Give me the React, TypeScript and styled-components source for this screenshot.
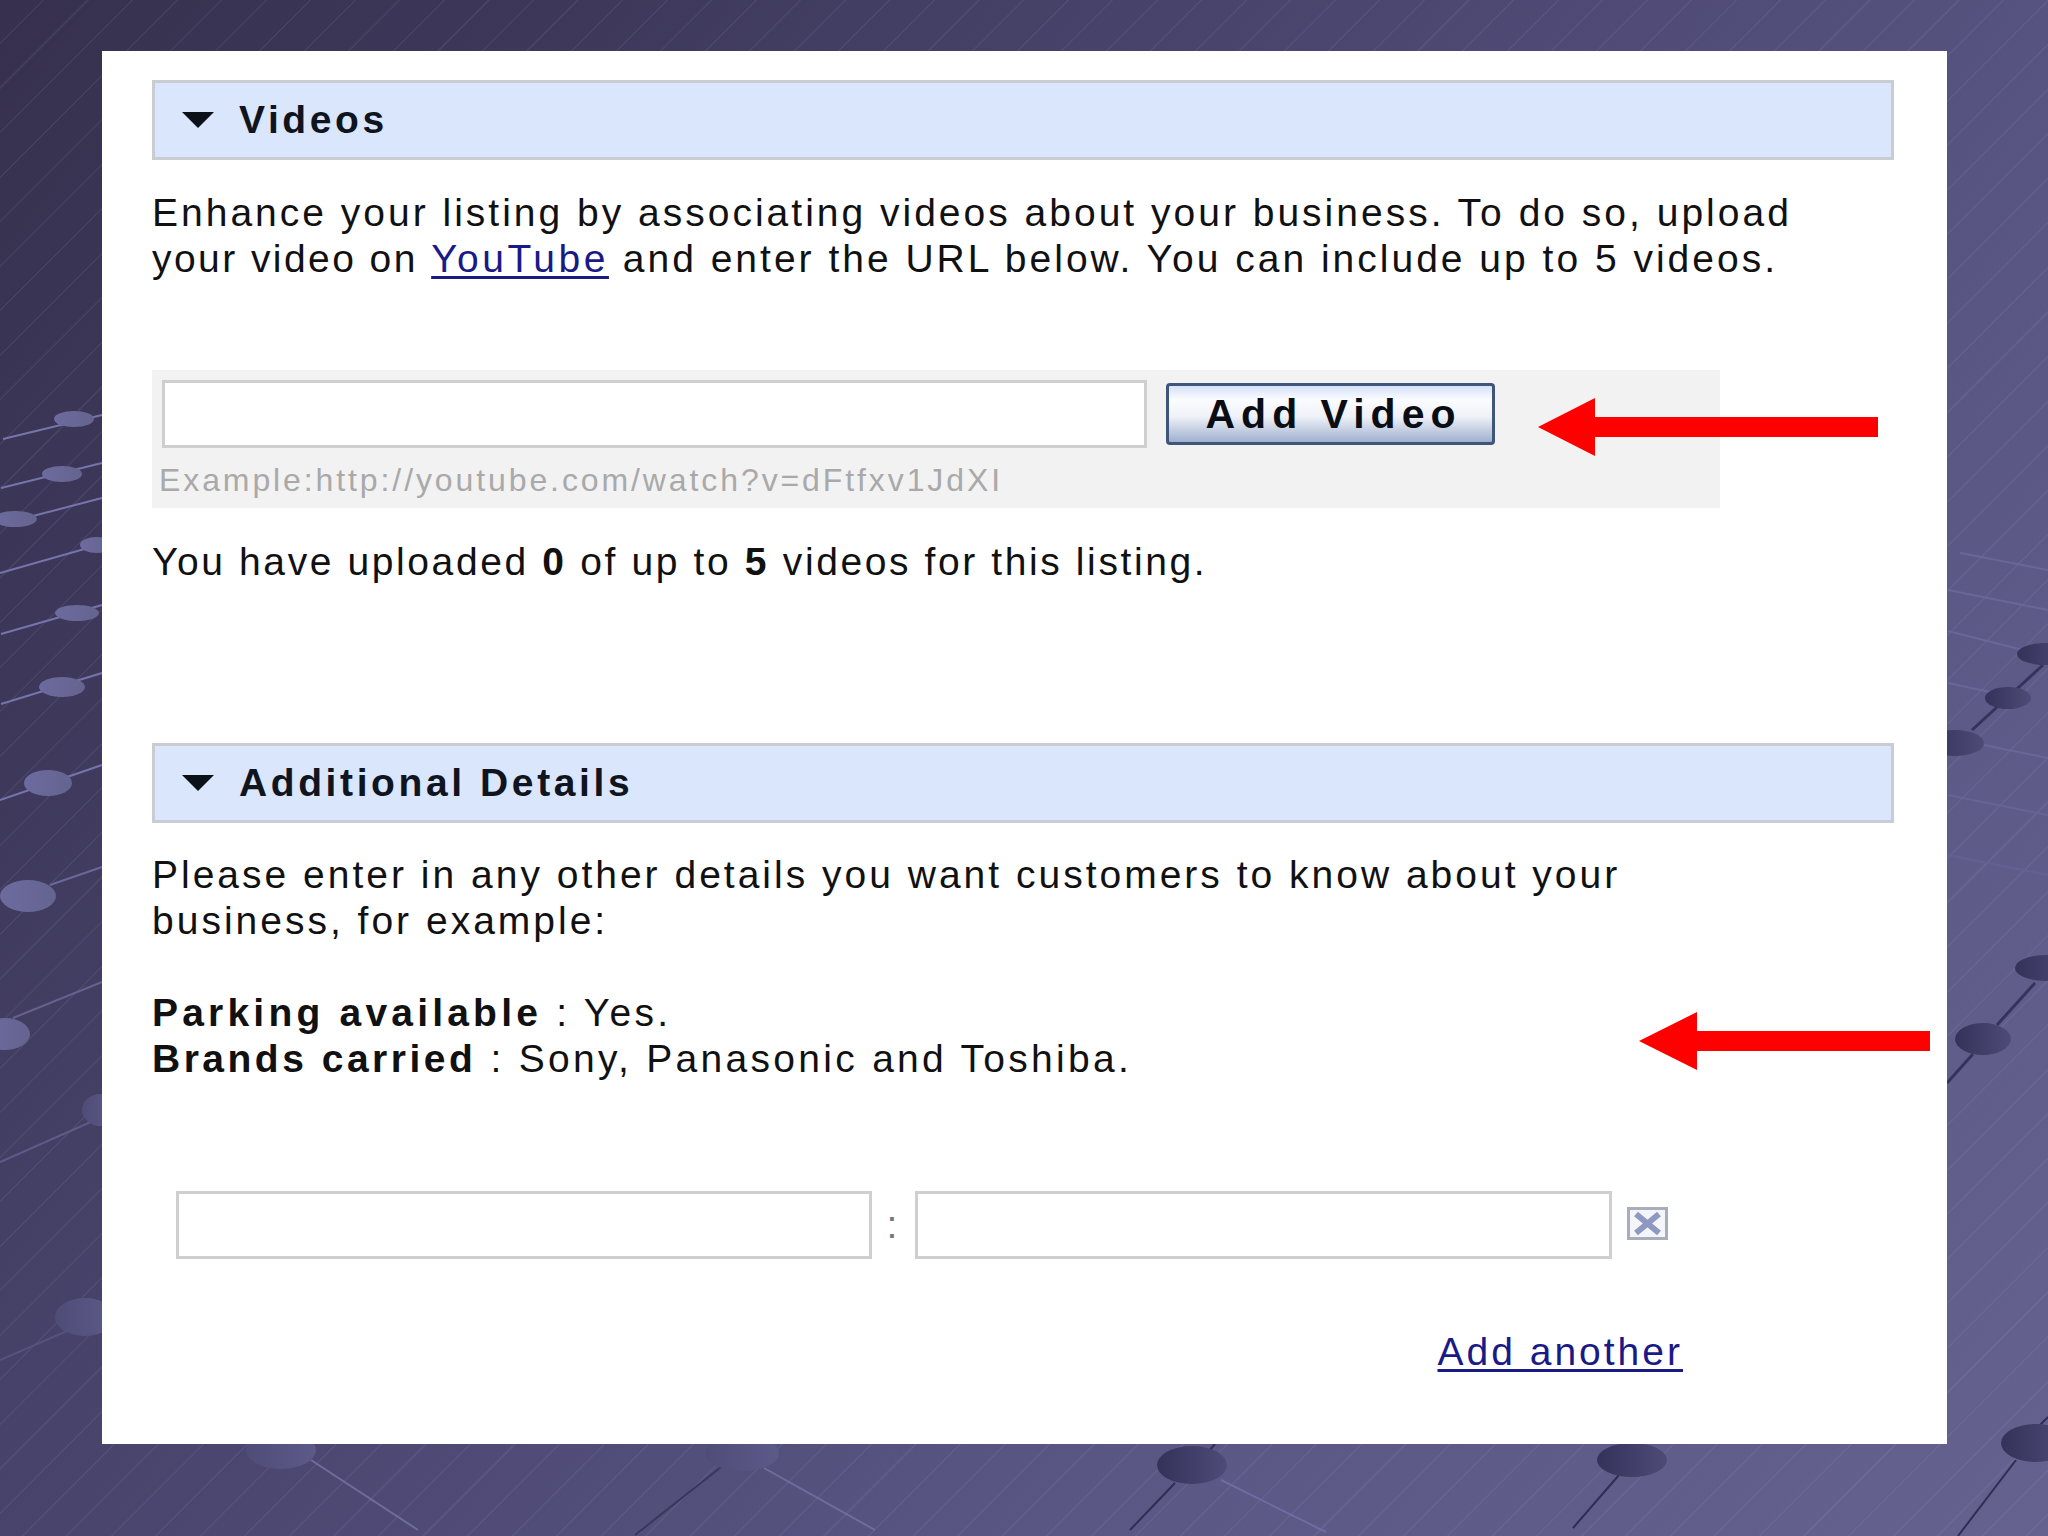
import React from 'react';
import styled, { createGlobalStyle } from 'styled-components';

const Global = createGlobalStyle`
  html, body { margin: 0; padding: 0; background: #4c4872; }
  * { box-sizing: border-box; }
`;

const Page = styled.div`
  position: relative;
  width: 2048px;
  height: 1536px;
  overflow: hidden;
  padding: 51px 101px 92px 102px;
  font-family: "Liberation Sans", Arial, sans-serif;
  background:
    repeating-linear-gradient(135deg, rgba(255,255,255,0) 0 30px, rgba(205,205,245,0.07) 30px 31.5px),
    linear-gradient(128deg, #37314f 0%, #3c3758 15%, #4c4872 45%, #5a5785 70%, #65628f 100%);
`;

const Backdrop = styled.svg`
  position: absolute;
  inset: 0;
  width: 2048px;
  height: 1536px;
`;

const Panel = styled.main`
  position: relative;
  height: 1393px;
  background: #fff;
  padding: 29px 53px 0 50px;
  color: #111;
  font-size: 39px;
  line-height: 46px;
  letter-spacing: 3px;
`;

const Header = styled.header<{ $top?: number }>`
  height: 80px;
  margin-top: ${p => p.$top ?? 0}px;
  display: flex;
  align-items: center;
  gap: 25px;
  padding-left: 27px;
  background: #d9e6fb;
  border: 3px solid #c9ccd3;
  font-size: 39px;
  font-weight: 700;
  letter-spacing: 3.6px;
  color: #10141f;
`;

const Caret = styled.span`
  width: 0;
  height: 0;
  border-left: 16px solid transparent;
  border-right: 16px solid transparent;
  border-top: 16px solid #0c1018;
`;

const Text = styled.p<{ $top: number; $ls?: number }>`
  margin: ${p => p.$top}px 0 0;
  white-space: nowrap;
  letter-spacing: ${p => p.$ls ?? 3}px;
`;

const Strong = styled.b<{ $ls: number }>`
  letter-spacing: ${p => p.$ls}px;
`;

const Tight = styled.span`
  letter-spacing: 2.44px;
`;

const Link = styled.a<{ $ls?: number }>`
  color: #1a1a86;
  text-decoration: underline;
  text-underline-offset: 4px;
  text-decoration-thickness: 3px;
  letter-spacing: ${p => p.$ls ?? 3}px;
`;

const UploadBox = styled.section`
  width: 1568px;
  height: 138px;
  margin-top: 88px;
  padding: 10px 0 0 10px;
  background: #f2f2f3;
`;

const UploadRow = styled.div`
  display: flex;
  align-items: center;
  gap: 19px;
`;

const Field = styled.input<{ $w: number }>`
  width: ${p => p.$w}px;
  height: 68px;
  background: #fff;
  border: 3px solid #cfcfcf;
  outline: none;
  padding: 0;
`;

const AddButton = styled.button`
  width: 329px;
  height: 62px;
  border: 3px solid #3f5579;
  border-radius: 4px;
  background: linear-gradient(#d6e2f8 0%, #fbfcff 25%, #eef1f7 55%, #9fb0cf 100%);
  font: 700 41px/1 "Liberation Sans", Arial, sans-serif;
  letter-spacing: 6px;
  color: #0b0d14;
  padding: 0 0 0 6px;
`;

const Example = styled.div`
  margin: 14px 0 0 -3px;
  font-size: 32px;
  line-height: 36px;
  letter-spacing: 2.9px;
  color: #a9a9a9;
  white-space: nowrap;
`;

const PairRow = styled.div`
  display: flex;
  align-items: center;
  margin: 109px 0 0 24px;
`;

const Colon = styled.span`
  width: 43px;
  text-align: center;
  color: #777;
`;

const RemoveIcon = styled.svg`
  width: 41px;
  height: 33px;
  margin: -4px 0 0 15px;
`;

const AddRow = styled.div`
  display: flex;
  justify-content: flex-end;
  margin: 70px 211px 0 0;
`;

const Arrow = styled.svg<{ $x: number; $y: number; $w: number }>`
  position: absolute;
  left: ${p => p.$x}px;
  top: ${p => p.$y}px;
  width: ${p => p.$w}px;
  height: 58px;
`;

type Dot = [number, number, number, number, string];
const dots: Dot[] = [
  [74, 419, 20, 8, 'url(#light)'], [62, 474, 20, 8, 'url(#light)'], [15, 519, 22, 8, 'url(#light)'],
  [97, 545, 17, 8, 'url(#light)'], [77, 613, 22, 8, 'url(#light)'], [62, 687, 23, 10, 'url(#light)'],
  [48, 783, 24, 13, 'url(#light)'], [28, 896, 28, 16, 'url(#light)'], [5, 1034, 25, 16, 'url(#light)'],
  [100, 1110, 18, 16, 'url(#fade)'], [85, 1317, 30, 19, 'url(#fade)'],
  [281, 1450, 35, 19, 'url(#fade)'], [742, 1453, 37, 18, 'url(#fade)'],
  [1192, 1465, 35, 19, 'url(#dark)'], [1632, 1460, 35, 17, 'url(#dark)'], [2036, 1443, 35, 19, 'url(#dark)'],
  [2045, 654, 28, 11, 'url(#dark)'], [2008, 698, 23, 11, 'url(#dark)'], [1955, 743, 29, 13, 'url(#dark)'],
  [2046, 968, 31, 13, 'url(#dark)'], [1983, 1039, 28, 16, 'url(#dark)'],
];

type Line = [number, number, number, number, string, number];
const L = '#7674ad';
const D = '#2f2d52';
const lines: Line[] = [
  [3, 439, 102, 415, L, 2], [1, 488, 102, 463, L, 2], [33, 516, 102, 498, L, 2], [0, 573, 102, 544, L, 2],
  [1, 634, 102, 605, L, 2], [1, 704, 102, 673, L, 2], [0, 800, 102, 765, L, 2], [50, 885, 102, 867, '#6a6898', 2],
  [13, 1018, 102, 982, '#64628f', 2], [0, 1162, 102, 1117, '#5d5b88', 2], [0, 1360, 67, 1331, '#55527e', 2],
  [311, 1460, 418, 1530, '#6f6d99', 2], [721, 1467, 635, 1535, '#39375c', 2], [764, 1468, 875, 1530, '#6f6d99', 2],
  [1175, 1483, 1130, 1530, D, 2], [1221, 1480, 1326, 1532, '#6f6d9f', 2], [1215, 1444, 1210, 1450, D, 2],
  [1619, 1475, 1573, 1528, D, 2], [2016, 1460, 1958, 1536, D, 2], [2048, 1417, 2040, 1425, D, 2],
  [1972, 730, 2043, 665, '#35335c', 3], [1997, 1025, 2035, 983, '#35335c', 3], [1947, 1083, 1973, 1054, '#35335c', 3],
  [1960, 553, 2048, 570, '#696799', 2], [1948, 590, 2048, 610, '#696799', 2], [1948, 631, 2023, 650, '#696799', 2],
  [1948, 683, 1990, 692, '#696799', 2], [1984, 745, 2048, 758, '#696799', 2], [1948, 795, 2048, 815, '#666496', 2],
  [1948, 855, 2048, 875, '#636192', 2],
];

export default function App() {
  return (
    <Page>
      <Global />
      <Backdrop viewBox="0 0 2048 1536">
        <defs>
          <linearGradient id="light"><stop offset="0" stopColor="#6d6b9f" /><stop offset="1" stopColor="#65638f" /></linearGradient>
          <linearGradient id="fade"><stop offset="0" stopColor="#4f4c78" /><stop offset="1" stopColor="#5c5a88" /></linearGradient>
          <linearGradient id="dark"><stop offset="0" stopColor="#34325a" /><stop offset="1" stopColor="#4e4b78" /></linearGradient>
        </defs>
        {lines.map(([a, b, c, d, s, w], i) => <line key={i} x1={a} y1={b} x2={c} y2={d} stroke={s} strokeWidth={w} />)}
        {dots.map(([x, y, rx, ry, f], i) => <ellipse key={i} cx={x} cy={y} rx={rx} ry={ry} fill={f} />)}
      </Backdrop>
      <Panel>
        <Header><Caret />Videos</Header>
        <Text $top={30}>
          Enhance your listing by associating videos about your business. To do so, upload<br />
          <Tight>your video on </Tight><Link href="#" $ls={3.5}>YouTube</Link> and enter the URL below. You can include up to 5 videos.
        </Text>
        <UploadBox>
          <UploadRow>
            <Field $w={985} />
            <AddButton>Add Video</AddButton>
          </UploadRow>
          <Example>Example:http://youtube.com/watch?v=dFtfxv1JdXI</Example>
        </UploadBox>
        <Text $top={31} $ls={2.6}>You have uploaded <Strong $ls={3}>0</Strong> of up to <Strong $ls={3}>5</Strong> videos for this listing.</Text>
        <Header $top={158}><Caret />Additional Details</Header>
        <Text $top={29}>
          Please enter in any other details you want customers to know about your<br />
          business, for example:
        </Text>
        <Text $top={46} $ls={3.3}>
          <Strong $ls={4.2}>Parking available</Strong> : Yes.<br />
          <Strong $ls={3.5}>Brands carried</Strong> : Sony, Panasonic and Toshiba.
        </Text>
        <PairRow>
          <Field $w={696} />
          <Colon>:</Colon>
          <Field $w={697} />
          <RemoveIcon viewBox="0 0 41 33">
            <rect x="1.5" y="1.5" width="38" height="30" fill="#f4f5f9" stroke="#a8adb9" strokeWidth="3" />
            <path d="M9 7 L32 26 M32 7 L9 26" stroke="#8d99c2" strokeWidth="6" />
          </RemoveIcon>
        </PairRow>
        <AddRow><Link href="#">Add another</Link></AddRow>
        <Arrow $x={1436} $y={347} $w={340} viewBox="0 0 340 58">
          <path d="M0 29 L57 0 V19 H340 V39 H57 V58 Z" fill="#fe0000" />
        </Arrow>
        <Arrow $x={1537} $y={961} $w={291} viewBox="0 0 291 58">
          <path d="M0 29 L58 0 V19 H291 V39 H58 V58 Z" fill="#fe0000" />
        </Arrow>
      </Panel>
    </Page>
  );
}
